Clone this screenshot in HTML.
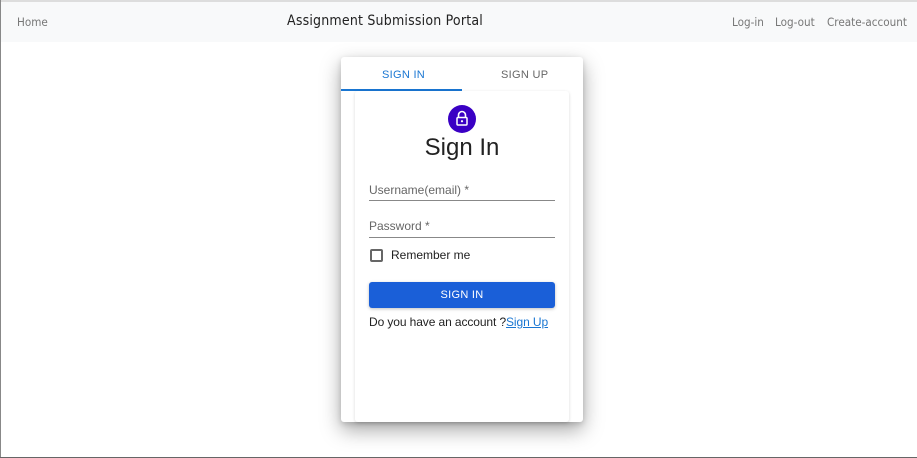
<!DOCTYPE html>
<html><head><style>
*{box-sizing:border-box;margin:0;padding:0}
body{width:917px;height:458px;background:#fff;font-family:"Liberation Sans",sans-serif;position:relative;overflow:hidden}
.bl{position:absolute;left:0;top:0;width:1px;height:458px;background:#888}
.bt{position:absolute;left:0;top:0;width:917px;height:2px;background:#ddd}
.bb{position:absolute;left:0;top:457px;width:917px;height:1px;background:#666}
.nav{position:absolute;left:1px;top:2px;right:0;height:40px;background:#f8f9fa;font-family:"DejaVu Sans Condensed","Liberation Sans Narrow",sans-serif;color:#777;font-size:11.6px}
.nav span{position:absolute;top:13px}
.title{color:#222;font-size:14px;left:286px;top:11px!important;letter-spacing:.2px}
.card{position:absolute;left:341px;top:57px;width:242px;height:365px;background:#fff;box-shadow:0 8px 20px rgba(0,0,0,.35),0 2px 6px rgba(0,0,0,.15);border-radius:3px}
.tab{position:absolute;top:12px;font-size:11px;letter-spacing:.3px}
.ind{position:absolute;left:0;top:32px;width:121px;height:2px;background:#1976d2}
.inner{position:absolute;left:14px;top:34px;width:214px;height:331px;box-shadow:0 1px 3px rgba(0,0,0,.15);border-radius:3px}
.abs{position:absolute}
.t{font-size:12px}
</style></head><body>
<div class="bt"></div><div class="bl"></div><div class="bb"></div>
<div class="nav">
<span style="left:16px">Home</span>
<span class="title">Assignment Submission Portal</span>
<span style="left:731px">Log-in</span>
<span style="left:774px">Log-out</span>
<span style="left:826px">Create-account</span>
</div>
<div class="card">
<div class="tab" style="left:41px;color:#1976d2">SIGN IN</div>
<div class="tab" style="left:160px;color:#666">SIGN UP</div>
<div class="ind"></div>
<div class="inner">
<div class="abs" style="left:93px;top:14px;width:28px;height:28px;border-radius:50%;background:#3a00c4"><svg width="28" height="28" viewBox="0 0 28 28"><path d="M10.5 12.5v-2.5a3.5 3.5 0 0 1 7 0v2.5" fill="none" stroke="#fff" stroke-width="1.6"/><rect x="9" y="12.5" width="10" height="7.5" rx="1" fill="none" stroke="#fff" stroke-width="1.5"/><circle cx="14" cy="16.2" r="1.1" fill="#fff"/></svg></div>
<div class="abs" style="left:0;width:214px;top:43px;text-align:center;font-size:24px;color:#222">Sign In</div>
<div class="abs t" style="left:14px;top:92px;color:#666">Username(email) *</div>
<div class="abs" style="left:14px;top:109px;width:186px;height:1px;background:#888"></div>
<div class="abs t" style="left:14px;top:128px;color:#666">Password *</div>
<div class="abs" style="left:14px;top:146px;width:186px;height:1px;background:#888"></div>
<div class="abs" style="left:15px;top:158px;width:13px;height:13px;border:2px solid #666;border-radius:2px"></div>
<div class="abs t" style="left:36px;top:157px;color:#222">Remember me</div>
<div class="abs" style="left:14px;top:191px;width:186px;height:26px;background:#1a5fd8;border-radius:3px;color:#fff;font-size:11px;text-align:center;line-height:26px;letter-spacing:.3px;box-shadow:0 1px 3px rgba(0,0,0,.25)">SIGN IN</div>
<div class="abs t" style="left:14px;top:224px;color:#222;letter-spacing:-.1px">Do you have an account ?<span style="color:#1976d2;text-decoration:underline">Sign Up</span></div>
</div>
</div>
</body></html>
